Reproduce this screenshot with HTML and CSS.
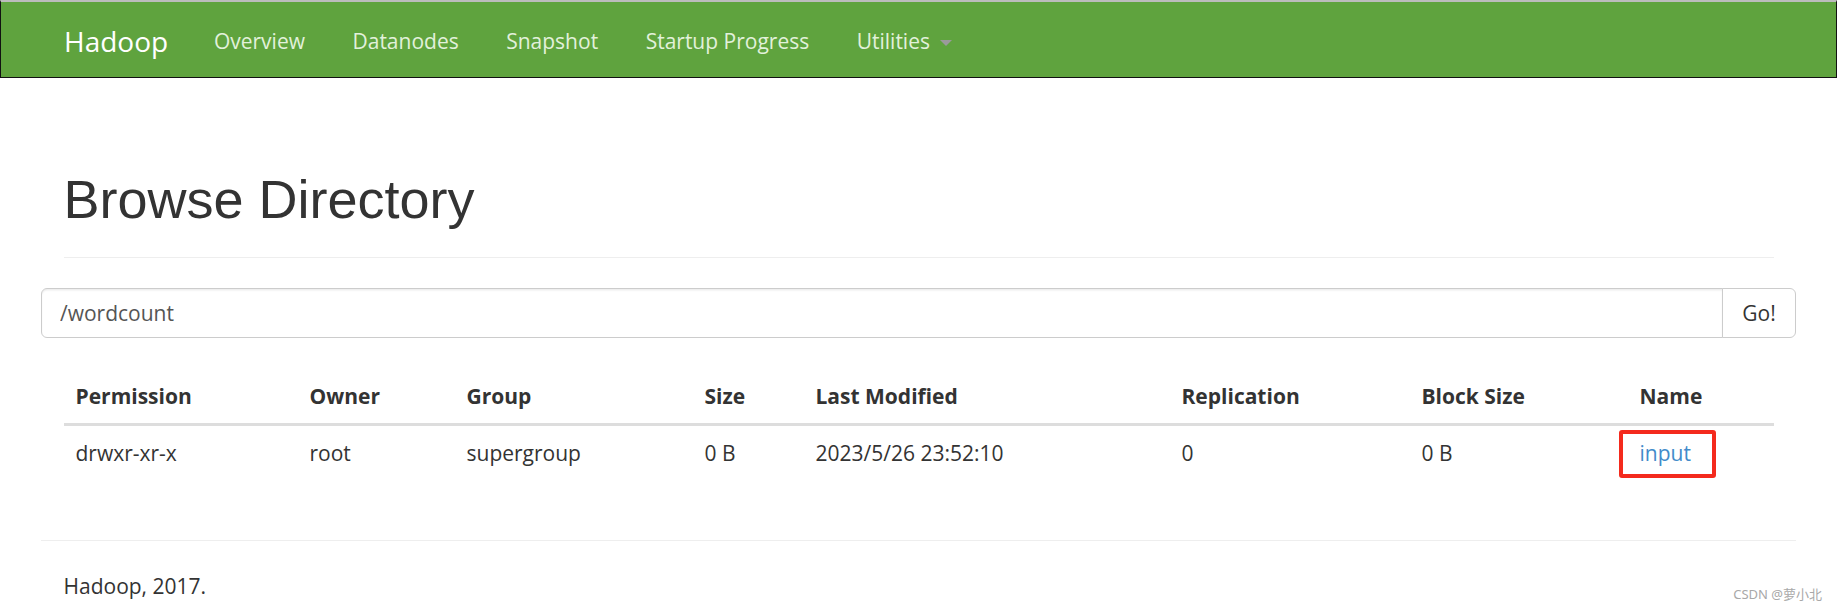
FILE: index.html
```html
<!DOCTYPE html>
<html lang="en">
<head>
<meta charset="utf-8">
<title>Browsing HDFS</title>
<link rel="stylesheet" href="styles.css">
</head>
<body>
<header class="navbar">
  <div class="nav-inner">
    <a class="brand" href="#">Hadoop</a>
    <ul class="nav">
      <li><a href="#">Overview</a></li>
      <li><a href="#">Datanodes</a></li>
      <li><a href="#">Snapshot</a></li>
      <li><a href="#">Startup Progress</a></li>
      <li><a href="#">Utilities <span class="caret"></span></a></li>
    </ul>
  </div>
</header>

<main class="container">
  <div class="page-header">
    <h1>Browse Directory</h1>
  </div>

  <div class="input-group">
    <input class="form-control" type="text" value="/wordcount">
    <button class="btn" type="button">Go!</button>
  </div>

  <table class="table">
    <colgroup>
      <col class="c-perm">
      <col class="c-owner">
      <col class="c-group">
      <col class="c-size">
      <col class="c-mod">
      <col class="c-rep">
      <col class="c-block">
      <col class="c-name">
    </colgroup>
    <thead>
      <tr>
        <th>Permission</th>
        <th>Owner</th>
        <th>Group</th>
        <th>Size</th>
        <th>Last Modified</th>
        <th>Replication</th>
        <th>Block Size</th>
        <th>Name</th>
      </tr>
    </thead>
    <tbody>
      <tr>
        <td>drwxr-xr-x</td>
        <td>root</td>
        <td>supergroup</td>
        <td>0 B</td>
        <td>2023/5/26 23:52:10</td>
        <td>0</td>
        <td>0 B</td>
        <td><span class="mark"><a class="link" href="#">input</a></span></td>
      </tr>
    </tbody>
  </table>

  <hr class="footer-rule">
  <footer class="footer">
    <p>Hadoop, 2017.</p>
  </footer>
</main>

<div class="watermark">CSDN @萝小北</div>
</body>
</html>
```

FILE: styles.css
```css
html, body {
  margin: 0;
  padding: 0;
  background: #fff;
}

body {
  font-family: "Open Sans", "Noto Sans", sans-serif;
  font-size: 21px;
  line-height: 30px;
  color: #333;
  position: relative;
  min-height: 609px;
}

/* ---------- navbar ---------- */
.navbar {
  height: 75px;
  background: #5fa33e;
  border: 1px solid #111;
  border-top: 2px solid #bcbcbc;
}

.nav-inner {
  width: 1755px;
  margin: 0 auto;
  height: 75px;
  display: flex;
}

.brand {
  display: block;
  padding: 3px 22px 0 23px;
  line-height: 72px;
  font-size: 28px;
  color: #fff;
  text-decoration: none;
}

.nav {
  display: flex;
  list-style: none;
  margin: 0;
  padding: 0;
}

.nav a {
  display: block;
  padding: 3px 23.75px 0;
  line-height: 72px;
  font-size: 21px;
  color: #e2f1db;
  text-decoration: none;
}

.caret {
  display: inline-block;
  width: 0;
  height: 0;
  margin-left: 5px;
  vertical-align: middle;
  border-top: 6px solid #9a9a9a;
  border-left: 6px solid transparent;
  border-right: 6px solid transparent;
}

/* ---------- main ---------- */
.container {
  width: 1710px;
  padding: 0 22.5px;
  margin: 0 auto;
}

.page-header {
  margin: 92px 0 30px;
  padding-bottom: 27.5px;
  border-bottom: 1px solid #eee;
}

.page-header h1 {
  margin: 0;
  font-family: "Liberation Sans", Arial, sans-serif;
  font-size: 54px;
  font-weight: 500;
  line-height: 1.1;
  color: #333;
}

.input-group {
  display: flex;
  margin: 0 -22.5px;
}

.form-control {
  flex: 1;
  box-sizing: border-box;
  height: 50px;
  margin: 0;
  padding: 9px 18px;
  font-family: inherit;
  font-size: 21px;
  line-height: 30px;
  color: #555;
  background: #fff;
  border: 1px solid #ccc;
  border-radius: 6px 0 0 6px;
  box-shadow: inset 0 1.5px 1.5px rgba(0, 0, 0, 0.075);
  outline: none;
}

.btn {
  box-sizing: border-box;
  width: 74px;
  height: 50px;
  margin: 0 0 0 -1px;
  padding: 0;
  font-family: inherit;
  font-size: 21px;
  line-height: 30px;
  color: #333;
  background: #fff;
  border: 1px solid #ccc;
  border-radius: 0 6px 6px 0;
}

/* ---------- table ---------- */
.table {
  width: 100%;
  margin-top: 31px;
  border-collapse: separate;
  border-spacing: 0;
  table-layout: fixed;
}

.c-perm { width: 234px; }
.c-owner { width: 157px; }
.c-group { width: 238px; }
.c-size { width: 111px; }
.c-mod { width: 366px; }
.c-rep { width: 240px; }
.c-block { width: 218px; }
.c-name { width: 146px; }

.table th,
.table td {
  padding: 12px;
  line-height: 30px;
  text-align: left;
  vertical-align: bottom;
  white-space: nowrap;
}

.table th {
  font-weight: 700;
  border-bottom: 3px solid #ddd;
}

.mark {
  position: relative;
  display: inline-block;
}

.mark::after {
  content: "";
  position: absolute;
  left: -21px;
  right: -25px;
  top: -8px;
  bottom: -10px;
  border: 4px solid #f42a1d;
  border-radius: 3px;
}

.link {
  color: #428bca;
  text-decoration: none;
}

/* ---------- footer ---------- */
.footer-rule {
  margin: 60px -22.5px 30px;
  height: 0;
  border: 0;
  border-top: 1px solid #eee;
}

.footer p {
  margin: 0;
}

.watermark {
  position: absolute;
  right: 15px;
  bottom: 8px;
  font-family: "Noto Sans", "Noto Sans CJK SC", sans-serif;
  font-size: 13px;
  line-height: 13px;
  color: #a8a8a8;
}
```
